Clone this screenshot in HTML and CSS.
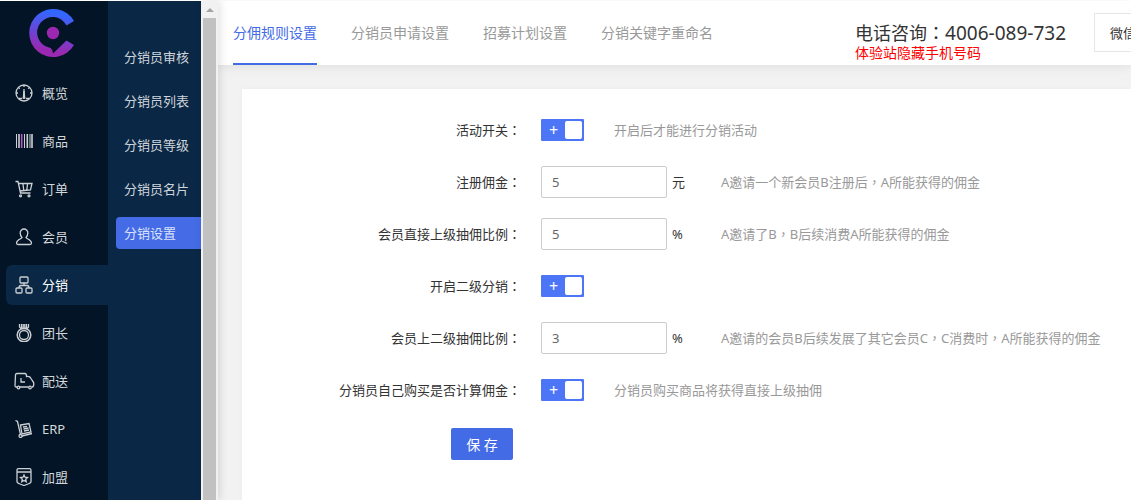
FILE: index.html
```html
<!DOCTYPE html>
<html lang="zh-CN">
<head>
  <meta charset="UTF-8" />
  <meta name="viewport" content="width=device-width, initial-scale=1.0"/>
  <title>分佣规则设置</title>
  <link rel="stylesheet" href="styles.css">
</head>
<body>
  <aside class="sidebar">
    <svg class="logo" viewBox="0 0 46 48">
      <defs>
        <linearGradient id="logoFill" x1="0.7" y1="0" x2="0.55" y2="1">
          <stop offset="0.1" stop-color="#3366ff"/>
          <stop offset="0.9" stop-color="#9a28b0"/>
        </linearGradient>
      </defs>
      <path fill="url(#logoFill)" d="M45 12 37.500 16.500A15.500 15.500 0 1 0 20 38.500Q23.500 39 24 44.500L37.500 31.500 45 36A24 24 0 1 1 45 12Z"/>
      <circle cx="24" cy="24" r="6.200" fill="#9c27b0"/>
    </svg>
    <nav class="main-nav">
      <a href="#">
        <svg viewBox="0 0 18 18"><circle cx="9" cy="9" r="8"/><path d="M9 1v2M1 9h2M15 9h2M3.300 3.300l1.400 1.400M14.700 3.300l-1.400 1.400M3.500 14.500h3.500M11 14.500h3.500M9 5v10" /><path d="M8.300 14l.700-7 .700 7z"/></svg>
        概览
      </a>
      <a href="#">
        <svg viewBox="0 0 18 18"><path d="M1.500 2v14M9.500 2v14M15 2v14" stroke-width="1"/><path d="M4 2v14M12.300 2v14M17 2v14" stroke-width="1.600"/><path d="M6.700 2v14" stroke="#b455c8" stroke-width="1.600"/></svg>
        商品
      </a>
      <a href="#">
        <svg viewBox="0 0 18 18"><path d="M.500 1.500h2.500l2.500 11.500h10M3.500 3.500h13.500l-1.500 6.500-10.500 1M8 4l.700 6M12.500 4l-.700 6"/><circle cx="5.500" cy="15.800" r="1"/><circle cx="14" cy="15.800" r="1"/></svg>
        订单
      </a>
      <a href="#">
        <svg viewBox="0 0 18 18"><path d="M9 1a3.800 3.800 0 0 0-3.800 4c0 2 .800 3.500 1.800 4.500-.500 1.500-5.500 2-5.500 5.500 0 1 .500 1.500 1.500 1.500h12c1 0 1.500-.500 1.500-1.500 0-3.500-5-4-5.500-5.500 1-1 1.800-2.500 1.800-4.500A3.800 3.800 0 0 0 9 1z"/></svg>
        会员
      </a>
      <a href="#" class="active">
        <svg viewBox="0 0 18 18"><rect x="5" y="1" width="8" height="6" rx="1"/><rect x="1" y="12" width="6" height="5" rx="1"/><rect x="11" y="12" width="6" height="5" rx="1"/><path d="M9 7v2.500M4 12c0-2 1-2.500 2-2.500h6c1 0 2 .500 2 2.500"/></svg>
        分销
      </a>
      <a href="#">
        <svg viewBox="0 0 18 18"><path d="M4.500 0v3l1.500 1.500h6l1.500-1.500v-3M6.500 0v4M8.200 0v4M9.800 0v4M11.500 0v4"/><circle cx="9" cy="11" r="6.800" stroke-width="1.500"/><circle cx="9" cy="11" r="4.500"/></svg>
        团长
      </a>
      <a href="#">
        <svg class="wide" viewBox="0 0 22 18"><path d="M4 15H3q-1 0-1-1.500L2.500 3q0-1.500 1.500-1.500h8q1.500 0 1.500 3 3.500-.500 4.500 2l2 3q.800 1 .800 2.500 0 3-1.800 3M7 15h8.500M8 6v4h4"/><circle cx="5.500" cy="15.500" r="1.300"/><circle cx="17" cy="15.500" r="1.300"/></svg>
        配送
      </a>
      <a href="#">
        <svg viewBox="0 0 18 18"><path d="M.500 .500l2 1 3 13M7 16l10-2.500M5.500 5l8.500-1.500 2 8.500-9 2zM8 7l4-.700M8.500 9l5-1M9 11l5-1"/><circle cx="5.500" cy="16" r="1.500"/></svg>
        ERP
      </a>
      <a href="#">
        <svg viewBox="0 0 18 18"><path d="M3.500 .700h11q1.500 0 1.500 1.500v11.300q0 1.500-3 2.500l-4 1.500-4-1.500q-3-1-3-2.500V2.200q0-1.500 1.500-1.500zM2 4h14"/><path d="M9 7l1 2.200 2.500.300-1.800 1.700.500 2.500L9 12.500l-2.200 1.200.500-2.500-1.800-1.700 2.500-.300z"/></svg>
        加盟
      </a>
    </nav>
  </aside>

  <aside class="submenu">
    <a href="#">分销员审核</a>
    <a href="#">分销员列表</a>
    <a href="#">分销员等级</a>
    <a href="#">分销员名片</a>
    <a href="#" class="active">分销设置</a>
  </aside>

  <div class="scrollbar">
    <span class="arrow"></span>
    <span class="thumb"></span>
  </div>

  <div class="content">
    <header class="topbar">
      <nav class="tabs">
        <a href="#" class="active">分佣规则设置</a>
        <a href="#">分销员申请设置</a>
        <a href="#">招募计划设置</a>
        <a href="#">分销关键字重命名</a>
      </nav>
      <div class="contact">
        <p class="phone">电话咨询<span class="colon" lang="zh-TW">：</span><span class="number">4006-089-732</span></p>
        <p class="notice">体验站隐藏手机号码</p>
      </div>
      <button type="button" class="wechat">微信</button>
    </header>

    <main class="panel">
      <form>
        <div class="form-row">
          <label for="activity">活动开关<span class="colon" lang="zh-TW">：</span></label>
          <input type="checkbox" class="switch" id="activity" checked>
          <span class="hint">开启后才能进行分销活动</span>
        </div>
        <div class="form-row">
          <label for="register">注册佣金<span class="colon" lang="zh-TW">：</span></label>
          <input type="text" class="text" id="register" value="5">
          <span class="unit">元</span>
          <span class="hint">A邀请一个新会员B注册后<span class="colon" lang="zh-TW">，</span>A所能获得的佣金</span>
        </div>
        <div class="form-row">
          <label for="direct">会员直接上级抽佣比例<span class="colon" lang="zh-TW">：</span></label>
          <input type="text" class="text" id="direct" value="5">
          <span class="unit">%</span>
          <span class="hint">A邀请了B<span class="colon" lang="zh-TW">，</span>B后续消费A所能获得的佣金</span>
        </div>
        <div class="form-row">
          <label for="second">开启二级分销<span class="colon" lang="zh-TW">：</span></label>
          <input type="checkbox" class="switch" id="second" checked>
        </div>
        <div class="form-row">
          <label for="secondRate">会员上二级抽佣比例<span class="colon" lang="zh-TW">：</span></label>
          <input type="text" class="text" id="secondRate" value="3">
          <span class="unit">%</span>
          <span class="hint">A邀请的会员B后续发展了其它会员C<span class="colon" lang="zh-TW">，</span>C消费时<span class="colon" lang="zh-TW">，</span>A所能获得的佣金</span>
        </div>
        <div class="form-row">
          <label for="self">分销员自己购买是否计算佣金<span class="colon" lang="zh-TW">：</span></label>
          <input type="checkbox" class="switch" id="self" checked>
          <span class="hint">分销员购买商品将获得直接上级抽佣</span>
        </div>
        <button type="submit" class="btn-save">保 存</button>
      </form>
    </main>
  </div>
</body>
</html>
```

FILE: styles.css
```css
* {
  box-sizing: border-box;
}

body {
  display: flex;
  height: 100vh;
  margin: 0;
  padding-top: 1px;
  overflow: hidden;
  background: #fff;
  color: #333;
  font-family: "Noto Sans", "Noto Sans CJK SC", sans-serif;
  font-size: 13px;
  line-height: 20px;
}

a {
  text-decoration: none;
}

p {
  margin: 0;
}

button,
input {
  margin: 0;
  font-family: inherit;
}

/* centred punctuation */
.colon {
  font-family: "Noto Sans CJK TC", sans-serif;
}

/* left navigation */
.sidebar {
  flex: none;
  width: 108px;
  background: #021425;
}

.logo {
  display: block;
  width: 46px;
  height: 48px;
  margin: 8px 0 16px 29px;
}

.main-nav {
  display: flex;
  flex-direction: column;
  gap: 8px;
  padding-left: 6px;
}

.main-nav a {
  display: flex;
  align-items: center;
  gap: 9px;
  height: 40px;
  padding-left: 9px;
  border-radius: 6px 0 0 6px;
  color: #d3d7db;
}

.main-nav a.active {
  background: #0a2745;
  color: #fff;
}

.main-nav svg {
  width: 18px;
  height: 18px;
  fill: none;
  stroke: #ccd0d4;
  stroke-width: 1.3;
}

.main-nav .wide {
  width: 22px;
  margin: 0 -2px;
}

.submenu {
  display: flex;
  flex: none;
  flex-direction: column;
  gap: 12px;
  width: 93px;
  padding: 40px 0 0 8px;
  background: #0a2745;
}

.submenu a {
  padding: 6px 8px;
  border-radius: 4px 0 0 4px;
  color: #ced4da;
}

.submenu a.active {
  background: #456ce6;
  color: #dae2fa;
}

.scrollbar {
  display: flex;
  flex: none;
  flex-direction: column;
  align-items: center;
  width: 17px;
  background: #f1f1f1;
  box-shadow: 2px 0 8px rgba(0, 0, 0, 0.12);
  z-index: 2;
}

.arrow {
  margin: 7px 0 6px;
  border: 4px solid transparent;
  border-top: 0;
  border-bottom-color: #a3a3a3;
}

.thumb {
  flex: 1;
  width: 13px;
  background: #c1c1c1;
}

/* page content */
.content {
  display: flex;
  flex: 1;
  flex-direction: column;
  min-width: 0;
  background: #f2f2f2;
}

.topbar {
  display: flex;
  flex: none;
  height: 64px;
  padding-left: 15px;
  background: #fff;
  box-shadow: 0 2px 10px rgba(0, 0, 0, 0.08);
}

.tabs {
  display: flex;
  gap: 34px;
  font-size: 14px;
  white-space: nowrap;
}

.tabs a {
  padding: 22px 0 20px;
  border-bottom: 2px solid transparent;
  color: #999;
}

.tabs a.active {
  border-color: #436be6;
  color: #436be6;
}

.contact {
  margin: 19px 28px 0 auto;
  white-space: nowrap;
}

.phone {
  font-size: 18px;
  line-height: 24px;
}

.number {
  font-size: 19px;
}

.notice {
  color: #f00;
  font-size: 14px;
  line-height: 16px;
}

.wechat {
  width: 37px;
  height: 39px;
  margin-top: 12px;
  padding: 0 0 0 15px;
  overflow: hidden;
  border: 1px solid #e6e6e6;
  border-right: 0;
  background: #fff;
  color: #333;
  font-size: 13px;
  text-align: left;
  white-space: nowrap;
}

.panel {
  flex: 1;
  margin: 24px 0 0 24px;
  padding-top: 25px;
  background: #fff;
  box-shadow: 0 0 6px rgba(0, 0, 0, 0.03);
}

.form-row {
  display: flex;
  align-items: center;
  height: 32px;
  margin-bottom: 20px;
  white-space: nowrap;
}

.form-row label {
  width: 279px;
  margin-right: 20px;
  text-align: right;
}

.text {
  width: 126px;
  height: 32px;
  padding: 0 10px;
  border: 1px solid #ccc;
  border-radius: 2px;
  color: #666;
  font-size: 13px;
}

.unit {
  width: 19px;
  margin-left: 5px;
}

.hint {
  margin-left: 30px;
  color: #999;
}

.switch {
  display: flex;
  align-items: center;
  justify-content: space-between;
  width: 43px;
  height: 22px;
  padding: 0 2px 0 8px;
  border-radius: 1px;
  background: #4d76f7;
  appearance: none;
}

.switch::before {
  content: "+";
  color: #fff;
  font-size: 16px;
}

.switch::after {
  content: "";
  width: 17px;
  height: 18px;
  border-radius: 2px;
  background: #fff;
}

.btn-save {
  display: block;
  width: 62px;
  height: 32px;
  margin: 22px 0 0 209px;
  padding: 0;
  border: 0;
  border-radius: 2px;
  background: #436be6;
  color: #fff;
  font-size: 14px;
}
```
